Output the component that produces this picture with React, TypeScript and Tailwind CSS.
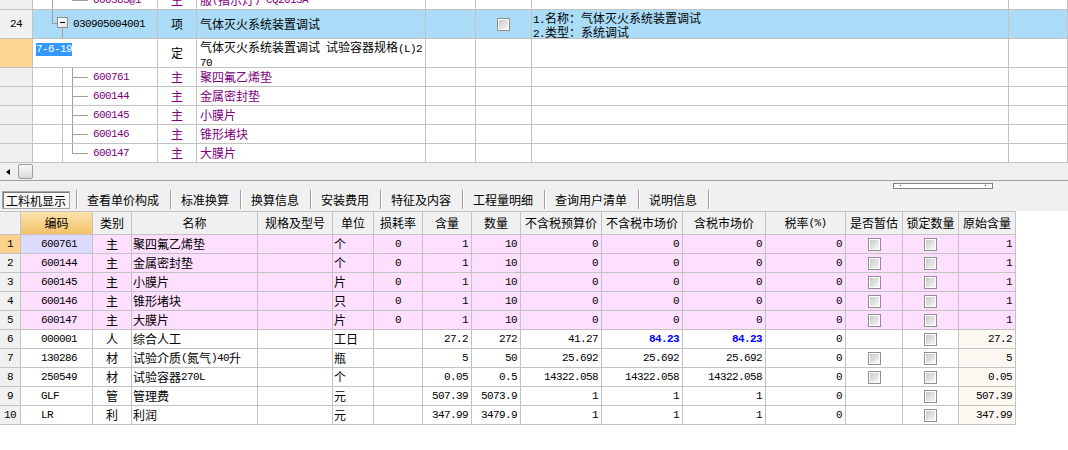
import React from 'react';

const G = 'border-[#c3c3c3]';
const monoCls = "font-['Liberation_Mono',monospace] text-[11px] tracking-[-0.6px]";

function Mixed({ text, bold }: { text: string; bold?: boolean }) {
  const parts = text.split(/([\x20-\x7e]+)/).filter(Boolean);
  return (
    <>
      {parts.map((p, i) =>
        /^[\x20-\x7e]+$/.test(p) ? (
          <span key={i} className={`${monoCls} whitespace-pre ${bold ? 'font-bold' : ''}`}>
            {p}
          </span>
        ) : (
          <span key={i}>{p}</span>
        )
      )}
    </>
  );
}

function Check() {
  return (
    <div className="w-[13px] h-[13px] border border-[#8f8f8f] bg-white p-px">
      <div className="w-full h-full bg-gradient-to-br from-[#c9c9c9] to-[#f7f7f7]" />
    </div>
  );
}

const TCOLS = 'grid grid-cols-[33px_125px_39px_229px_50px_56px_477px_59px]';
const tcell = `border-r border-b ${G} flex items-center overflow-hidden whitespace-nowrap`;

function TopGrid() {
  const mats: [string, string][] = [
    ['600761', '聚四氟乙烯垫'],
    ['600144', '金属密封垫'],
    ['600145', '小膜片'],
    ['600146', '锥形堵块'],
    ['600147', '大膜片'],
  ];
  return (
    <div className="bg-white">
      {/* partially visible row */}
      <div className="h-[10px] overflow-hidden">
        <div className={`${TCOLS} h-[19px] -mt-[9px] text-[#800080]`}>
          <div className={`${tcell} bg-[#f0f0f0]`} />
          <div className={`${tcell} relative`}>
            <div className="absolute left-[19px] top-0 bottom-0 w-px bg-[#a0a0a0]" />
            <div className="absolute left-[39px] top-0 h-[9px] w-px bg-[#a0a0a0]" />
            <div className="absolute left-[39px] top-[9px] w-[16px] h-px bg-[#a0a0a0]" />
            <span className={`${monoCls} pl-[60px]`}>600365@1</span>
          </div>
          <div className={`${tcell} justify-center`}>主</div>
          <div className={`${tcell} pl-[3px]`}>
            <Mixed text="服(指示灯) CQ2013A" />
          </div>
          <div className={tcell} />
          <div className={tcell} />
          <div className={tcell} />
          <div className={tcell} />
        </div>
      </div>

      {/* row 24 */}
      <div className={`${TCOLS} h-[29px]`}>
        <div className={`${tcell} justify-center bg-[#f0f0f0]`}>
          <span className={monoCls}>24</span>
        </div>
        <div className={`${tcell} relative bg-[#aadcf8]`}>
          <div className="absolute left-[19px] top-0 h-[13px] w-px bg-[#a0a0a0]" />
          <div className="absolute left-[19px] top-[13px] w-[5px] h-px bg-[#a0a0a0]" />
          <div className="absolute left-[24px] top-[7px] w-[11px] h-[11px] border border-[#8c8c8c] bg-gradient-to-br from-[#ffffff] to-[#e4e4e4] flex items-center justify-center">
            <div className="w-[5px] h-px bg-black" />
          </div>
          <div className="absolute left-[29px] top-[18px] bottom-0 w-px bg-[#a0a0a0]" />
          <span className={`${monoCls} pl-[40px]`}>030905004001</span>
        </div>
        <div className={`${tcell} justify-center bg-[#aadcf8]`}>项</div>
        <div className={`${tcell} pl-[3px] bg-[#aadcf8]`}>气体灭火系统装置调试</div>
        <div className={`${tcell} bg-[#aadcf8]`} />
        <div className={`${tcell} justify-center bg-[#aadcf8]`}>
          <Check />
        </div>
        <div className={`border-r border-b ${G} bg-[#aadcf8] pl-px pt-[2px] leading-[12px] whitespace-nowrap overflow-hidden`}>
          <div>
            <Mixed text="1.名称：气体灭火系统装置调试" />
          </div>
          <div>
            <Mixed text="2.类型：系统调试" />
          </div>
        </div>
        <div className={`${tcell} bg-[#aadcf8]`} />
      </div>

      {/* row 7-6-19 */}
      <div className={`${TCOLS} h-[29px]`}>
        <div className={`${tcell} bg-[#fdd491]`} />
        <div className={`border-r border-b ${G} pl-[3px] pt-px`}>
          <span className={`${monoCls} inline-block bg-[#3399ff] text-white leading-[13px] h-[13px]`}>7-6-19</span>
        </div>
        <div className={`${tcell} justify-center`}>定</div>
        <div className={`border-r border-b ${G} pl-[3px] pt-[2px] leading-[12px] whitespace-nowrap overflow-hidden`}>
          <div>
            <Mixed text="气体灭火系统装置调试 试验容器规格(L)2" />
          </div>
          <div>
            <Mixed text="70" />
          </div>
        </div>
        <div className={tcell} />
        <div className={tcell} />
        <div className={tcell} />
        <div className={tcell} />
      </div>

      {mats.map(([code, name], i) => (
        <div key={code} className={`${TCOLS} h-[19px] text-[#800080]`}>
          <div className={`${tcell} bg-[#f0f0f0]`} />
          <div className={`${tcell} relative`}>
            <div className="absolute left-[29px] top-0 bottom-0 w-px bg-[#c3c3c3]" />
            <div
              className={`absolute left-[39px] top-0 w-px bg-[#a0a0a0] ${
                i === mats.length - 1 ? 'h-[9px]' : 'bottom-0'
              }`}
            />
            <div className="absolute left-[39px] top-[9px] w-[16px] h-px bg-[#a0a0a0]" />
            <span className={`${monoCls} pl-[60px]`}>{code}</span>
          </div>
          <div className={`${tcell} justify-center`}>主</div>
          <div className={`${tcell} pl-[3px]`}>{name}</div>
          <div className={tcell} />
          <div className={tcell} />
          <div className={tcell} />
          <div className={tcell} />
        </div>
      ))}
    </div>
  );
}

function HScroll() {
  return (
    <div className="h-[18px] bg-[#f0f0f0] border-b border-[#a0a0a0] flex items-start">
      <div className="ml-[6px] mt-[6px] w-0 h-0 border-y-[3.5px] border-y-transparent border-r-[4px] border-r-black" />
      <div className="ml-[8px] mt-px w-[15px] h-[15px] border border-[#9c9c9c] rounded-[2px] bg-gradient-to-b from-[#f8f8f8] to-[#d9d9d9]" />
    </div>
  );
}

function TabBar() {
  const tabs = ['查看单价构成', '标准换算', '换算信息', '安装费用', '特征及内容', '工程量明细', '查询用户清单', '说明信息'];
  const sep = <div className="w-px h-[19px] bg-[#a0a0a0] shadow-[1px_0_0_#ffffff]" />;
  return (
    <div className="relative h-[30px] bg-[#f0f0f0] flex items-start pt-[9px] leading-[19px]">
      <div className="ml-[2px] mt-px h-[18px] w-[68px] border border-[#a8a8a8] shadow-[inset_1px_1px_0_#7a7a7a] bg-[#f7f7f7] flex items-center justify-center">
        工料机显示
      </div>
      <div className="ml-[6px]">{sep}</div>
      {tabs.map((t) => (
        <React.Fragment key={t}>
          <div className="pl-[10px] pr-[11px] h-[19px]">{t}</div>
          {sep}
        </React.Fragment>
      ))}
      <div className="absolute left-[893px] top-[2px] w-[100px] h-[6px] border border-[#808080] bg-white">
        <div className="absolute left-[6px] top-[1px] w-px h-px bg-[#2040a0]" />
        <div className="absolute left-[91px] top-[1px] w-px h-px bg-[#2040a0]" />
      </div>
    </div>
  );
}

const BCOLS =
  'grid grid-cols-[21px_72px_39px_126px_75px_41px_49px_49px_49px_81px_81px_83px_80px_57px_56px_57px] w-[1016px]';

type Row = {
  code: string;
  cat: string;
  name: string;
  unit: string;
  loss: string;
  han: string;
  qty: string;
  p1: string;
  p2: string;
  p3: string;
  blue?: boolean;
  zg: boolean;
  orig: string;
  pink: boolean;
};

const rows: Row[] = [
  { code: '600761', cat: '主', name: '聚四氟乙烯垫', unit: '个', loss: '0', han: '1', qty: '10', p1: '0', p2: '0', p3: '0', zg: true, orig: '1', pink: true },
  { code: '600144', cat: '主', name: '金属密封垫', unit: '个', loss: '0', han: '1', qty: '10', p1: '0', p2: '0', p3: '0', zg: true, orig: '1', pink: true },
  { code: '600145', cat: '主', name: '小膜片', unit: '片', loss: '0', han: '1', qty: '10', p1: '0', p2: '0', p3: '0', zg: true, orig: '1', pink: true },
  { code: '600146', cat: '主', name: '锥形堵块', unit: '只', loss: '0', han: '1', qty: '10', p1: '0', p2: '0', p3: '0', zg: true, orig: '1', pink: true },
  { code: '600147', cat: '主', name: '大膜片', unit: '片', loss: '0', han: '1', qty: '10', p1: '0', p2: '0', p3: '0', zg: true, orig: '1', pink: true },
  { code: '000001', cat: '人', name: '综合人工', unit: '工日', loss: '', han: '27.2', qty: '272', p1: '41.27', p2: '84.23', p3: '84.23', blue: true, zg: false, orig: '27.2', pink: false },
  { code: '130286', cat: '材', name: '试验介质(氮气)40升', unit: '瓶', loss: '', han: '5', qty: '50', p1: '25.692', p2: '25.692', p3: '25.692', zg: true, orig: '5', pink: false },
  { code: '250549', cat: '材', name: '试验容器270L', unit: '个', loss: '', han: '0.05', qty: '0.5', p1: '14322.058', p2: '14322.058', p3: '14322.058', zg: true, orig: '0.05', pink: false },
  { code: 'GLF', cat: '管', name: '管理费', unit: '元', loss: '', han: '507.39', qty: '5073.9', p1: '1', p2: '1', p3: '1', zg: false, orig: '507.39', pink: false },
  { code: 'LR', cat: '利', name: '利润', unit: '元', loss: '', han: '347.99', qty: '3479.9', p1: '1', p2: '1', p3: '1', zg: false, orig: '347.99', pink: false },
];

const bcell = `border-r border-b ${G} flex items-center overflow-hidden whitespace-nowrap`;

function Num({ v, bg, blue }: { v: string; bg: string; blue?: boolean }) {
  return (
    <div className={`${bcell} ${bg} justify-end pr-[3px]`}>
      <span className={`${monoCls} ${blue ? 'font-bold text-[#0000ff]' : ''}`}>{v}</span>
    </div>
  );
}

function BottomGrid() {
  const headers = ['编码', '类别', '名称', '规格及型号', '单位', '损耗率', '含量', '数量', '不含税预算价', '不含税市场价', '含税市场价', '税率(%)', '是否暂估', '锁定数量', '原始含量'];
  return (
    <div className="w-[1016px]">
      <div className={`${BCOLS} h-[24px]`}>
        <div className={`border-r border-t border-b ${G} bg-[#f0f0f0]`} />
        {headers.map((h, i) => (
          <div
            key={h}
            className={`border-r border-t border-b ${G} flex items-center justify-center whitespace-nowrap overflow-hidden ${
              i === 0 ? 'bg-gradient-to-b from-[#fbe2ad] to-[#f3c268]' : 'bg-[#f0f0f0]'
            }`}
          >
            <Mixed text={h} />
          </div>
        ))}
      </div>
      {rows.map((r, i) => {
        const bg = r.pink ? 'bg-[#ffdfff]' : 'bg-white';
        return (
          <div key={r.code} className={`${BCOLS} h-[19px]`}>
            <div className={`${bcell} justify-center ${i === 0 ? 'bg-[#fdd28c]' : 'bg-[#f0f0f0]'}`}>
              <span className={monoCls}>{i + 1}</span>
            </div>
            <div className={`${bcell} pl-[20px] ${i === 0 ? 'bg-[#dcdaff]' : bg}`}>
              <span className={monoCls}>{r.code}</span>
            </div>
            <div className={`${bcell} justify-center ${bg}`}>{r.cat}</div>
            <div className={`${bcell} pl-px ${bg}`}>
              <Mixed text={r.name} />
            </div>
            <div className={`${bcell} ${bg}`} />
            <div className={`${bcell} pl-px ${bg}`}>{r.unit}</div>
            <div className={`${bcell} justify-center ${bg}`}>
              <span className={monoCls}>{r.loss}</span>
            </div>
            <Num v={r.han} bg={bg} />
            <Num v={r.qty} bg={bg} />
            <Num v={r.p1} bg={bg} />
            <Num v={r.p2} bg={bg} blue={r.blue} />
            <Num v={r.p3} bg={bg} blue={r.blue} />
            <Num v="0" bg={bg} />
            <div className={`${bcell} justify-center ${bg}`}>{r.zg ? <Check /> : null}</div>
            <div className={`${bcell} justify-center ${bg}`}>
              <Check />
            </div>
            <Num v={r.orig} bg={r.pink ? bg : 'bg-[#fdf8f1]'} />
          </div>
        );
      })}
    </div>
  );
}

export default function App() {
  return (
    <div className="w-[1068px] h-[450px] overflow-hidden bg-white text-black text-[12px] leading-[14px] font-['Noto_Sans_CJK_SC',sans-serif]">
      <TopGrid />
      <HScroll />
      <TabBar />
      <BottomGrid />
    </div>
  );
}
